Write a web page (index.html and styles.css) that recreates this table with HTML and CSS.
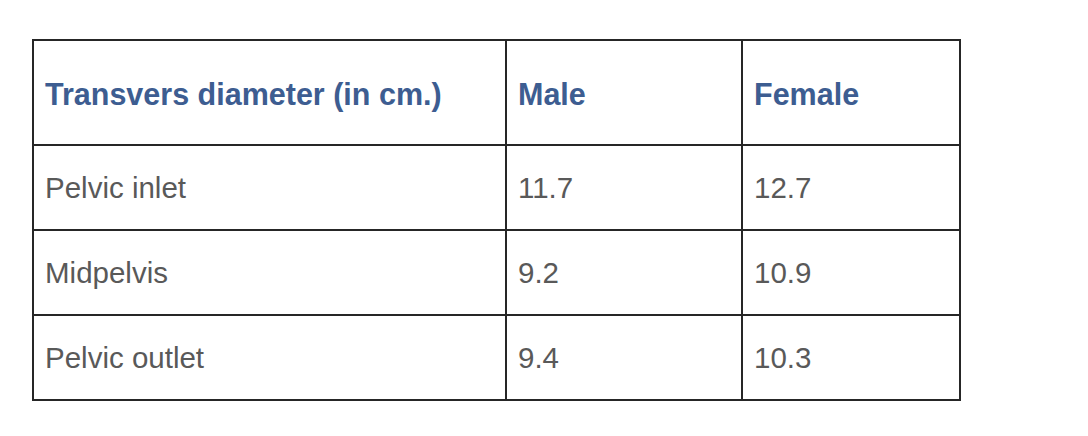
FILE: index.html
```html
<!DOCTYPE html>
<html lang="en">
<head>
    <meta charset="UTF-8">
    <title>Pelvic diameters</title>
    <link rel="stylesheet" href="styles.css">
</head>
<body>
    <table class="pelvis-table">
        <colgroup>
            <col class="col-label">
            <col class="col-male">
            <col class="col-female">
        </colgroup>
        <tr class="head-row">
            <th>Transvers diameter (in cm.)</th>
            <th>Male</th>
            <th>Female</th>
        </tr>
        <tr>
            <td>Pelvic inlet</td>
            <td>11.7</td>
            <td>12.7</td>
        </tr>
        <tr>
            <td>Midpelvis</td>
            <td>9.2</td>
            <td>10.9</td>
        </tr>
        <tr>
            <td>Pelvic outlet</td>
            <td>9.4</td>
            <td>10.3</td>
        </tr>
    </table>
</body>
</html>
```

FILE: styles.css
```css
body {
    margin: 0;
    padding: 39px 0 0 32px;
    background: #fff;
    font-family: "Liberation Sans", Arial, sans-serif;
}
.pelvis-table {
    border-collapse: collapse;
    table-layout: fixed;
    width: 927px;
}
.col-label {
    width: 473px;
}
.col-male {
    width: 236px;
}
.col-female {
    width: 218px;
}
.pelvis-table th,
.pelvis-table td {
    border: 2px solid #262626;
    padding: 0 11px;
    text-align: left;
    vertical-align: middle;
    font-size: 29.5px;
    height: 83px;
}
.pelvis-table th {
    color: #3d5d91;
    font-weight: bold;
    font-size: 30.5px;
    padding-top: 4px;
    height: 99px;
}
.pelvis-table td {
    color: #595959;
    font-weight: normal;
}
```
